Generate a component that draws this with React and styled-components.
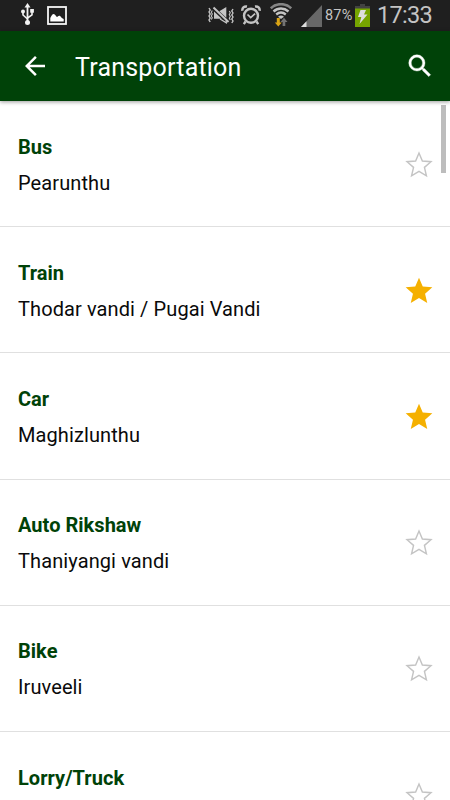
import styled, { createGlobalStyle } from 'styled-components'

const STAR_PATH =
	'M12 17.27L18.18 21l-1.64-7.03L22 9.24l-7.19-.61L12 2 9.19 8.63 2 9.24l5.46 4.73L5.82 21z'

const WORDS = [
	{ id: 1, title: 'Bus', meaning: 'Pearunthu', favorite: false },
	{ id: 2, title: 'Train', meaning: 'Thodar vandi / Pugai Vandi', favorite: true },
	{ id: 3, title: 'Car', meaning: 'Maghizlunthu', favorite: true },
	{ id: 4, title: 'Auto Rikshaw', meaning: 'Thaniyangi vandi', favorite: false },
	{ id: 5, title: 'Bike', meaning: 'Iruveeli', favorite: false },
	{ id: 6, title: 'Lorry/Truck', meaning: '', favorite: false },
]

function UsbIcon() {
	return (
		<svg width="15" height="24" viewBox="0 0 15 24" fill="none" stroke="#f2f2f2">
			<path d="M7.5 4v16" strokeWidth="1.8" />
			<path d="M3 9v3l4.5 4M12 8.5v3.3L7.5 15" strokeWidth="1.6" />
			<path d="M7.5 0l3 4.6h-6z" fill="#f2f2f2" stroke="none" />
			<circle cx="3" cy="8.5" r="2" fill="#f2f2f2" stroke="none" />
			<rect x="10.2" y="6" width="3.7" height="3.7" fill="#f2f2f2" stroke="none" />
			<circle cx="7.5" cy="19.5" r="2.5" fill="#f2f2f2" stroke="none" />
		</svg>
	)
}

function PictureIcon() {
	return (
		<svg width="20" height="19" viewBox="0 0 20 19">
			<rect x="1" y="1" width="18" height="17" fill="none" stroke="#f4f4f4" strokeWidth="1.8" />
			<path d="M3.3 15.5V12c1-2 2-4 3.400-4 1.600 0 2 2.500 3.300 3 .8 0 1-1.200 2.300-1.200 1.500 0 1.500 2 4.400 3.200v2.500z" fill="#fff" />
		</svg>
	)
}

function VibrateIcon() {
	return (
		<svg width="26" height="18" viewBox="0 0 26 18" fill="none" stroke="#c4c4c4">
			<path d="M1 2l1.200 2L1 6l1.200 2L1 10l1.200 2L1 14l1.200 2" strokeWidth="1.4" />
			<path d="M25 3l-1.200 2L25 7l-1.200 2 1.200 2-1.200 2 1.200 2-1.200 2" strokeWidth="1.4" />
			<path d="M4.300 4.500l-1 1.800 1 1.800-1 1.800 1 1.800-1 1.800M21.300 5l1 1.800-1 1.800 1 1.800-1 1.800 1 1.800" strokeWidth="1.1" />
			<path d="M6 5.500l7.800 7.200H6zM11.300 5.300L18.300 1v10.700z" fill="#c4c4c4" stroke="none" />
			<path d="M5.500 1.500L20.500 16" strokeWidth="2" />
			<path d="M12 13l6.300 3.800v-2.500" strokeWidth="1.3" />
		</svg>
	)
}

function AlarmIcon() {
	return (
		<svg width="20" height="20" viewBox="0 0 20 20" fill="none" stroke="#c4c4c4">
			<circle cx="10" cy="10.8" r="7" strokeWidth="2.4" />
			<path d="M6.500 9.500l3.200 3.200 4.400-4" strokeWidth="1.7" />
			<path d="M1.400 5.800C1 3 3 1 6 1.500M18.600 5.800C19 3 17 1 14 1.500" strokeWidth="2.5" />
			<path d="M4.500 16.500l-1.700 2.600M15.500 16.500l1.700 2.600" strokeWidth="2.3" />
		</svg>
	)
}

function WifiIcon() {
	return (
		<svg width="22" height="24" viewBox="0 0 22 24" fill="none">
			<path d="M.8 5.300C6.500-.2 15.500-.2 21.200 5.300" stroke="#858585" strokeWidth="2.6" />
			<path d="M3.500 8.500c4.500-4 10.500-4 15 0" stroke="#c4c4c4" strokeWidth="2.4" />
			<path d="M6.200 11.500c3-2.500 6.600-2.500 9.600 0" stroke="#c4c4c4" strokeWidth="2.3" />
			<path d="M8 13.700q3-2.200 6 0l-3 2.300z" fill="#c4c4c4" />
			<path d="M6.800 15h3v4.500h2l-3.500 4-3.500-4h2z" fill="#dba514" />
			<path d="M12.600 23h2.700v-4h2.200L14 14.800 10.500 19h2.100z" fill="#747474" />
		</svg>
	)
}

function SignalIcon() {
	return (
		<svg width="21" height="22" viewBox="0 0 21 22">
			<path d="M0 22L21 0v22z" fill="#686868" />
			<path d="M0 22l5.500-5.800V22z" fill="#dedede" />
		</svg>
	)
}

function BatteryIcon() {
	return (
		<svg width="15" height="23" viewBox="0 0 15 23">
			<path d="M5 0h5v2h5v3H0V2h5z" fill="#424242" />
			<path d="M0 4.500h15V23H0z" fill="#76a500" />
			<path d="M5.500 6h5.500L9 10.500h3.500L4.500 20l1.800-7H3z" fill="#dedede" />
		</svg>
	)
}

function StatusBar() {
	return (
		<Bar>
			<Notifications>
				<UsbIcon />
				<PictureIcon />
			</Notifications>
			<SystemIcons>
				<VibrateIcon />
				<AlarmIcon />
				<WifiGroup>
					<WifiIcon />
					<SignalGroup>
						<SignalIcon />
					</SignalGroup>
				</WifiGroup>
				<Battery>
					<Percent>87%</Percent>
					<BatteryIcon />
				</Battery>
				<Clock>17:33</Clock>
			</SystemIcons>
		</Bar>
	)
}

function WordRow({ title, meaning, favorite }) {
	return (
		<Row>
			<Texts>
				<WordTitle>{title}</WordTitle>
				<Meaning>{meaning}</Meaning>
			</Texts>
			<Star viewBox="0 0 24 24" $favorite={favorite}>
				<path d={STAR_PATH} />
			</Star>
		</Row>
	)
}

function App() {
	return (
		<>
			<GlobalStyle />
			<Screen>
				<StatusBar />
				<Header>
					<HeaderButton aria-label="Back">
						<svg width="30" height="30" viewBox="0 0 24 24" fill="#fff">
							<path d="M20 11H7.830l5.590-5.590L12 4l-8 8 8 8 1.410-1.410L7.830 13H20v-2z" />
						</svg>
					</HeaderButton>
					<HeaderTitle>Transportation</HeaderTitle>
					<HeaderButton aria-label="Search">
						<svg width="30" height="30" viewBox="0 0 24 24" fill="#fff" stroke="#fff" strokeWidth="0.3">
							<path d="M15.500 14h-.79l-.28-.27A6.471 6.471 0 0 0 16 9.500 6.500 6.500 0 1 0 9.500 16c1.610 0 3.090-.59 4.230-1.570l.27.28v.79l5 4.990L20.490 19l-4.990-5zm-6 0C7.010 14 5 11.990 5 9.500S7.010 5 9.500 5 14 7.010 14 9.500 11.990 14 9.500 14z" />
						</svg>
					</HeaderButton>
				</Header>
				<List>
					{WORDS.map(word => (
						<WordRow key={word.id} {...word} />
					))}
					<Scrollbar />
				</List>
			</Screen>
		</>
	)
}
export default App

const GlobalStyle = createGlobalStyle`
	* {
		box-sizing: border-box;
	}
	body {
		margin: 0;
		overflow: hidden;
		font-family: Roboto, 'Liberation Sans', sans-serif;
	}
	svg {
		display: block;
		flex-shrink: 0;
	}
`

const Screen = styled.div`
	display: flex;
	flex-direction: column;
	width: 450px;
	height: 800px;
	overflow: hidden;
	background: #fff;
`

const Bar = styled.div`
	display: flex;
	flex-shrink: 0;
	justify-content: space-between;
	height: 31px;
	padding: 0 17px 0 20px;
	background: #1f1f1f;
`

const Notifications = styled.div`
	display: flex;
	align-items: center;
	gap: 12px;
	padding-bottom: 1px;
`

const SystemIcons = styled.div`
	display: flex;
	align-items: center;
	gap: 7px;
	padding-bottom: 1px;
	color: #c4c4c4;
`

const WifiGroup = styled.div`
	display: flex;
	align-items: center;
	gap: 9px;
	margin-left: 2px;
`

const SignalGroup = styled.div`
	padding-top: 2px;
`

const Battery = styled.div`
	display: flex;
	align-items: center;
	gap: 2px;
	margin-left: -4px;
`

const Percent = styled.span`
	width: 28px;
	padding-top: 1px;
	font-size: 14.5px;
	letter-spacing: 0.2px;
`

const Clock = styled.span`
	width: 56px;
	font-size: 23.5px;
	letter-spacing: -0.7px;
	line-height: 30px;
`

const Header = styled.header`
	position: relative;
	z-index: 1;
	display: flex;
	flex-shrink: 0;
	align-items: center;
	height: 70px;
	padding: 0 15px 0 20px;
	background: #004208;
	box-shadow: 0 1px 4px rgba(0, 0, 0, 0.4);
`

const HeaderButton = styled.button`
	padding: 0;
	border: 0;
	background: none;
`

const HeaderTitle = styled.h1`
	flex: 1;
	margin: 0 0 0 25px;
	padding-top: 3px;
	color: #fff;
	font-size: 25px;
	font-weight: 400;
	letter-spacing: 0.2px;
	line-height: 30px;
`

const List = styled.div`
	position: relative;
	flex: 1;
	overflow: hidden;
`

const Row = styled.div`
	display: flex;
	align-items: center;
	justify-content: space-between;
	height: 126.2px;
	padding: 2px 15px 0 18px;
	border-bottom: 1px solid #e0e0e0;
`

const Texts = styled.div`
	display: flex;
	flex-direction: column;
	gap: 12px;
`

const WordTitle = styled.div`
	color: #004208;
	font-size: 20px;
	font-weight: 700;
	letter-spacing: 0.03px;
	line-height: 24px;
`

const Meaning = styled.div`
	min-height: 24px;
	color: #0a0a0a;
	font-size: 20px;
	letter-spacing: 0.1px;
	line-height: 24px;
`

const Star = styled.svg`
	width: 32px;
	height: 32px;
	fill: ${({ $favorite }) => ($favorite ? '#f5b000' : 'none')};
	stroke: ${({ $favorite }) => ($favorite ? 'none' : '#c4c4c4')};
	stroke-width: 1.2;

	path {
		transform: ${({ $favorite }) => ($favorite ? 'none' : 'scale(0.9)')};
		transform-origin: 12px 12px;
	}
`

const Scrollbar = styled.div`
	position: absolute;
	top: 4px;
	right: 4px;
	width: 5px;
	height: 68px;
	background: #bdbdbd;
`
